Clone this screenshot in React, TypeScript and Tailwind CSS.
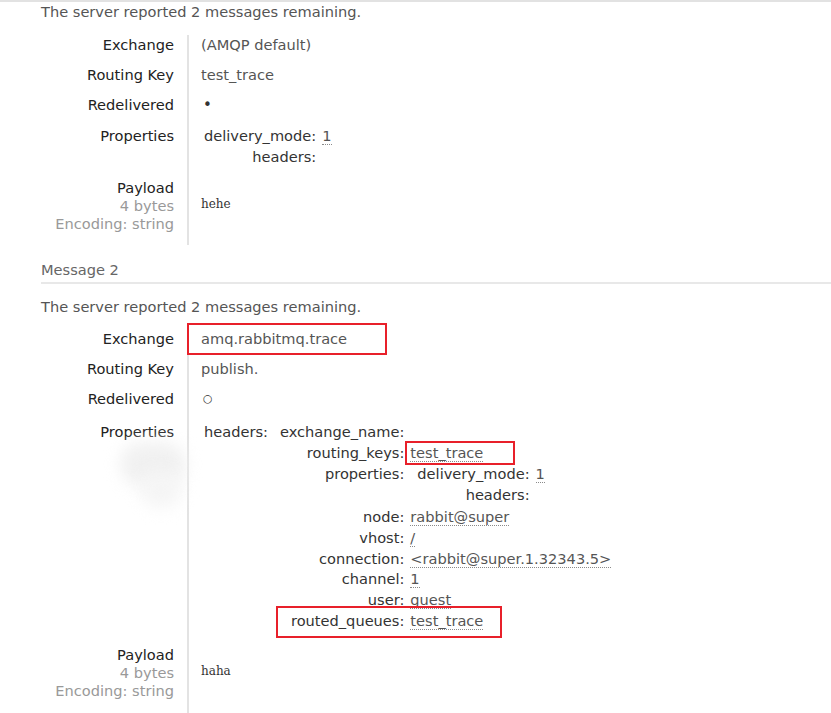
import React from "react";

type KV = { k: string; v?: React.ReactNode; box?: string };

const Abbr = ({ children }: { children: React.ReactNode }) => (
  <span className="border-b border-dotted border-[#8a8a8a] text-[#555]">{children}</span>
);

// nested key/value table, like the management UI renders message properties
const Facts = ({ rows }: { rows: KV[] }) => (
  <div className="grid grid-cols-[auto_1fr] leading-[20.7px]">
    {rows.map((r) => (
      <React.Fragment key={r.k}>
        <div className="relative pl-[3px] pr-[3px] text-right text-[#333] whitespace-nowrap">
          {r.box === "row" && (
            <div className="absolute left-[-1px] top-[-5px] h-[32px] w-[226px] border-2 border-[#e8202a]" />
          )}
          {r.k}
        </div>
        <div className="relative pl-[3px] whitespace-nowrap">
          {r.box === "value" && (
            <div className="absolute left-[-2px] top-[-2px] h-[24px] w-[110px] border-2 border-[#e8202a]" />
          )}
          <span className="relative">{r.v}</span>
        </div>
      </React.Fragment>
    ))}
  </div>
);

const Row = ({
  label,
  sub,
  children,
  pad,
}: {
  label: string;
  sub?: boolean;
  children?: React.ReactNode;
  pad: string;
}) => (
  <div className="grid grid-cols-[146px_1fr]">
    <div className={"pr-[13px] text-right " + pad}>
      {sub ? (
        <div className="leading-[18px]">
          <div className="text-[#222]">{label}</div>
          <div className="text-[#999]">4 bytes</div>
          <div className="text-[#999]">Encoding: string</div>
        </div>
      ) : (
        <div className="leading-5 text-[#222]">{label}</div>
      )}
    </div>
    <div className={"relative border-l-2 border-[#e3e3e3] pl-[12px] text-[#555] " + pad}>{children}</div>
  </div>
);

const Payload = ({ text }: { text: string }) => (
  <pre className="pt-[16px] text-[12px] leading-[18px] text-[#333] [font-family:'DejaVu_Serif',serif]">{text}</pre>
);

export default function App() {
  return (
    <div className="relative min-h-[713px] overflow-hidden bg-white text-[14.6px] [font-family:'DejaVu_Sans',Verdana,sans-serif]">
      <div className="border-t-2 border-[#e2e2e2]" />
      <div className="pl-[41px]">
        <p className="leading-[18px] pt-px text-[#555]">The server reported 2 messages remaining.</p>

        <div className="mt-[14px]">
          <Row label="Exchange" pad="pb-[10px]">
            <div className="leading-5">(AMQP default)</div>
          </Row>
          <Row label="Routing Key" pad="pb-[10px]">
            <div className="leading-5">test_trace</div>
          </Row>
          <Row label="Redelivered" pad="pb-[10px]">
            <div className="h-5 pl-[2px] text-[15px] leading-5 text-[#333]">•</div>
          </Row>
          <Row label="Properties" pad="pt-px pb-[12px]">
            <Facts
              rows={[
                { k: "delivery_mode:", v: <Abbr>1</Abbr> },
                { k: "headers:", v: "" },
              ]}
            />
          </Row>
          <Row label="Payload" sub pad="pb-[12px]">
            <Payload text="hehe" />
          </Row>
        </div>

        <h3 className="mt-[16px] border-b-2 border-[#e8e8e8] pb-[3px] leading-[18px] text-[#666]">Message 2</h3>
        <p className="mt-[14px] leading-[18px] text-[#555]">The server reported 2 messages remaining.</p>

        <div className="mt-[13px]">
          <Row label="Exchange" pad="pb-[10px]">
            <div className="absolute left-[-2px] top-[-6px] h-[32px] w-[200px] border-2 border-[#e8202a]" />
            <div className="leading-5">amq.rabbitmq.trace</div>
          </Row>
          <Row label="Routing Key" pad="pb-[10px]">
            <div className="leading-5">publish.</div>
          </Row>
          <Row label="Redelivered" pad="pb-[10px]">
            <div className="h-5 pl-[2px] text-[11px] leading-5 text-[#333]">○</div>
          </Row>
          <Row label="Properties" pad="pt-[3px] pb-[15px]">
            <Facts
              rows={[
                {
                  k: "headers:",
                  v: (
                    <div className="pl-[3px]">
                      <Facts
                        rows={[
                          { k: "exchange_name:", v: "" },
                          { k: "routing_keys:", v: <Abbr>test_trace</Abbr>, box: "value" },
                          {
                            k: "properties:",
                            v: (
                              <div className="pb-[2px] pl-[4px]">
                                <Facts
                                  rows={[
                                    { k: "delivery_mode:", v: <Abbr>1</Abbr> },
                                    { k: "headers:", v: "" },
                                  ]}
                                />
                              </div>
                            ),
                          },
                          { k: "node:", v: <Abbr>rabbit@super</Abbr> },
                          { k: "vhost:", v: <Abbr>/</Abbr> },
                          { k: "connection:", v: <Abbr>&lt;rabbit@super.1.32343.5&gt;</Abbr> },
                          { k: "channel:", v: <Abbr>1</Abbr> },
                          { k: "user:", v: <Abbr>guest</Abbr> },
                          { k: "routed_queues:", v: <Abbr>test_trace</Abbr>, box: "row" },
                        ]}
                      />
                    </div>
                  ),
                },
              ]}
            />
          </Row>
          <Row label="Payload" sub pad="pb-[30px]">
            <Payload text="haha" />
          </Row>
        </div>
      </div>

      {/* smudge left in the screenshot */}
      <div className="pointer-events-none absolute left-[120px] top-[442px] h-[44px] w-[66px] rounded-full bg-[#f1f1f1] blur-[8px]" />
      <div className="pointer-events-none absolute left-[140px] top-[470px] h-[38px] w-[42px] rounded-full bg-[#f5f5f5] blur-[8px]" />
    </div>
  );
}
